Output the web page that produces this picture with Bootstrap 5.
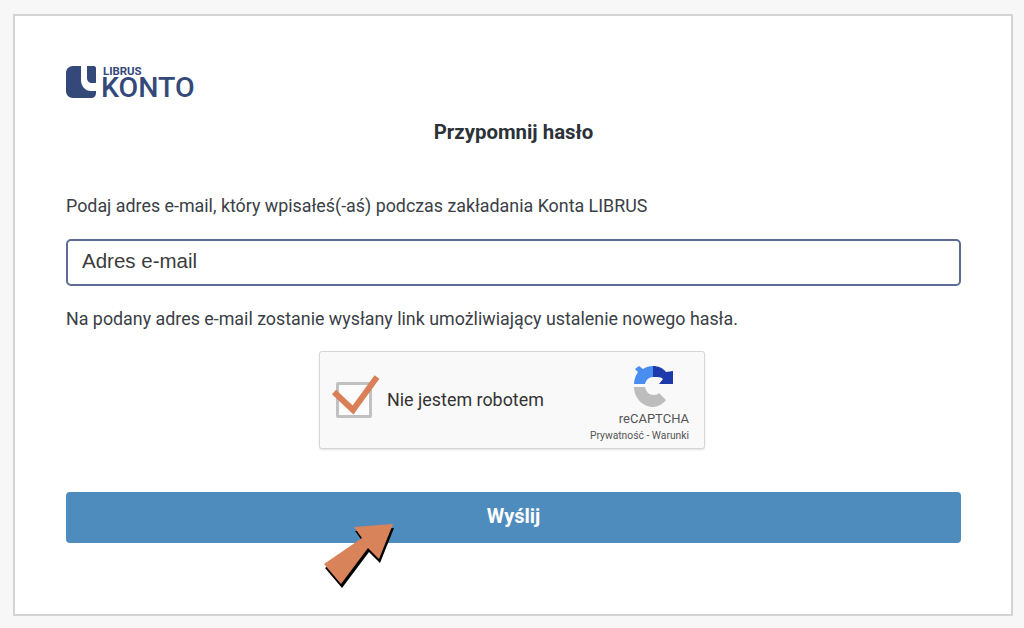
<!DOCTYPE html>
<html lang="pl">
<head>
  <meta charset="UTF-8">
  <title>Przypomnij hasło | Konto LIBRUS</title>
  <link href="https://cdn.jsdelivr.net/npm/bootstrap@5.3.0/dist/css/bootstrap.min.css" rel="stylesheet">
  <style>
    html, body { height: 100%; }
    body { background: #f7f7f7; font-family: Roboto, sans-serif; color: #333a40; overflow: hidden; }
    .sheet { position: relative; width: 1000px; height: 602px; margin: 14px 0 0 13px; padding: 50px 50px 0 51px; background: #fff; border: 2px solid #d4d4d4; }
    .logo-box { height: 35px; color: #34497a; }
    .logo-box svg { display: block; flex: none; }
    .logo-words { margin-left: 6px; }
    .logo-small { font-size: 11.4px; font-weight: 700; line-height: 9px; height: 9px; margin: 1px 0 0 1px; }
    .logo-big { font-size: 28.5px; font-weight: 500; line-height: 23px; height: 23px; margin-left: -1px; }
    .sheet-title { font-size: 20.4px; font-weight: 700; line-height: 24px; color: #2b3238; margin: 19px 0 50px; }
    .hint { font-size: 17.85px; line-height: 24px; margin: 0; color: #3a4046; }
    .mail-input.form-control { height: 47px; margin: 21px 0 21px; padding: 0 14px 3px; font: 20.5px "Liberation Sans", sans-serif; border: 2px solid #5c6c96; border-radius: 5px; color: #333; }
    .mail-input.form-control::placeholder { color: #3c3c3c; opacity: 1; }
    .captcha-box { width: 386px; height: 98px; margin: 20px 0 43px 253px; padding: 0 15px 0 16px; background: #f9f9f9; border: 1px solid #d6d6d6; border-radius: 3px; box-shadow: 0 1px 2px rgba(0,0,0,.12); }
    .captcha-check { width: 36px; height: 36px; border: 3px solid #c1c1c1; background: #fcfcfc; border-radius: 2px; }
    .captcha-label { font-size: 17.9px; color: #333; margin-left: 15px; }
    .captcha-brand { width: 100px; padding-top: 14px; color: #555; }
    .captcha-brand svg { margin-right: 15px; }
    .captcha-name { font-size: 13px; line-height: 14px; margin-top: 5px; }
    .captcha-links { font-size: 10.3px; line-height: 14px; margin-top: 3px; white-space: nowrap; }
    .send-btn.btn { height: 51px; padding: 0 0 3px; background: #4e8cbd; border: 0; border-radius: 4px; font-size: 20px; font-weight: 700; color: #fff; }
    .tick-mark { position: absolute; left: 316px; top: 356px; }
    .pointer-arrow { position: absolute; left: 305px; top: 504px; }
  </style>
</head>
<body>
  <div class="sheet">
    <div class="logo-box d-flex">
      <svg width="30" height="32" viewBox="0 0 30 32">
        <path d="M7 0h8v14c0 6 4 11 10 11h5v2c0 3-2 5-5 5H7c-4 0-7-3-7-7V7c0-4 3-7 7-7z" fill="#34497a"/>
        <path d="M21 0h7c1 0 2 1 2 2v15h-4c-3 0-5-2-5-5z" fill="#34497a"/>
      </svg>
      <div class="logo-words">
        <div class="logo-small">LIBRUS</div>
        <div class="logo-big">KONTO</div>
      </div>
    </div>
    <h1 class="sheet-title text-center">Przypomnij hasło</h1>
    <p class="hint">Podaj adres e-mail, który wpisałeś(-aś) podczas zakładania Konta LIBRUS</p>
    <input type="text" class="form-control mail-input" placeholder="Adres e-mail">
    <p class="hint">Na podany adres e-mail zostanie wysłany link umożliwiający ustalenie nowego hasła.</p>
    <div class="captcha-box d-flex align-items-center justify-content-between">
      <div class="d-flex align-items-center">
        <div class="captcha-check"></div>
        <span class="captcha-label">Nie jestem robotem</span>
      </div>
      <div class="captcha-brand d-flex flex-column align-items-end align-self-start">
        <svg width="40" height="41" viewBox="0 0 40 41">
          <path d="M5 0l4 3c3-2 6-3 10-3v11c-4 0-7 3-8 7H0C0 13 2 9 4 6L1 3z" fill="#4a8df0"/>
          <path d="M19 0c5 0 10 2 13 6l7-1v13H25l4-5c-2-2-5-2-7-2h-3z" fill="#1c3aa9"/>
          <path d="M0 21h11c1 5 4 8 9 8 2 0 4-1 5-2l7 7c-3 4-8 7-13 7C9 41 0 32 0 21z" fill="#bdbdbd"/>
        </svg>
        <div class="captcha-name">reCAPTCHA</div>
        <div class="captcha-links">Prywatność - Warunki</div>
      </div>
    </div>
    <button type="button" class="btn send-btn w-100">Wyślij</button>

    <svg class="tick-mark" width="52" height="46" viewBox="0 0 52 46">
      <path d="M3 20l19 18L46 5" fill="none" stroke="#d98059" stroke-width="6"/>
    </svg>
    <svg class="pointer-arrow" width="78" height="72" viewBox="0 0 78 72">
      <path d="M34 7L73 4 59 39 48 28 21 64 4 44 42 18z" fill="#000" transform="translate(1 4)"/>
      <path d="M34 7L73 4 59 39 48 28 21 64 4 44 42 18z" fill="#d9835b"/>
    </svg>
  </div>
  <script src="https://cdn.jsdelivr.net/npm/bootstrap@5.3.0/dist/js/bootstrap.bundle.min.js"></script>
</body>
</html>
